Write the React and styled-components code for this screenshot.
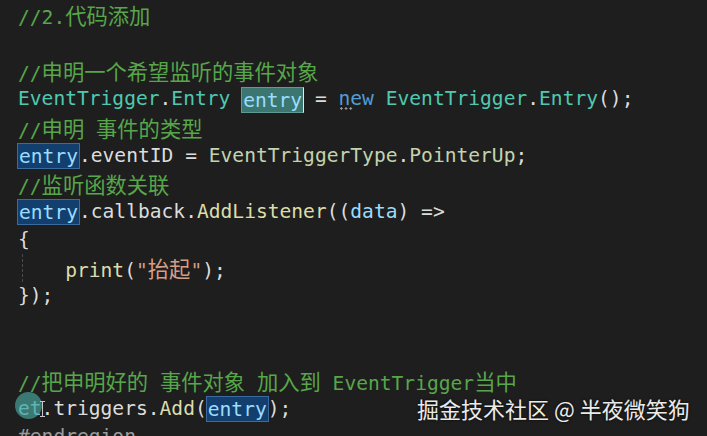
import styled, { createGlobalStyle } from "styled-components";

const GlobalStyle = createGlobalStyle`
  html, body {
    margin: 0;
    padding: 0;
    background: #1e1e1e;
  }
  #root {
    width: 707px;
    height: 436px;
    overflow: hidden;
  }
`;

const colors = {
  plain: "#dcdcdc",
  comment: "#57a64a",
  type: "#4ec9b0",
  local: "#9cdcfe",
  method: "#dcdcaa",
  keyword: "#569cd6",
  string: "#d69d85",
  enum: "#c3d3ae",
  region: "#9b9b9b",
};

const Editor = styled.div`
  position: relative;
  width: 707px;
  height: 436px;
  background: #1e1e1e;
  padding: 1px 0 0 18px;
  box-sizing: border-box;
  font-family: "DejaVu Sans Mono", "Noto Sans CJK SC", monospace;
  font-size: 19.6px;
  overflow: hidden;
`;

const Line = styled.div`
  position: relative;
  height: 28.15px;
  line-height: 28.15px;
  white-space: pre;
`;

const Token = styled.span`
  color: ${(p) => colors[p.$kind] || colors.plain};
`;

const Han = styled.span`
  font-family: "Noto Sans CJK SC", sans-serif;
  font-size: 21.3px;
`;

const Mark = styled.span`
  display: inline-block;
  line-height: 26px;
  height: 26px;
  margin: 0 -1px;
  padding: 0 1px;
  vertical-align: middle;
  color: #9cdcfe;
  background: ${(p) => (p.$active ? "#3b7770" : "#133f6e")};
  border: 1px solid ${(p) => (p.$active ? "#5f9a93" : "#3a6a9e")};
  border-right-color: ${(p) => (p.$active ? "#e6e6e6" : "#3a6a9e")};
  box-sizing: border-box;
`;

const Dots = styled.span`
  position: absolute;
  left: 321px;
  top: 22px;
  width: 14px;
  height: 3px;
  background: radial-gradient(circle, #9a9a9a 1px, transparent 1.3px) 0 0 / 4.7px 3px repeat-x;
`;

const IndentGuide = styled.span`
  position: absolute;
  left: 4px;
  top: 0;
  height: 28px;
  border-left: 1px dashed #4a4a4a;
`;

const ClickRing = styled.span`
  position: absolute;
  left: -3px;
  top: -3px;
  width: 27px;
  height: 27px;
  border-radius: 50%;
  background: rgba(70, 160, 150, 0.7);
  z-index: 1;
`;

const Caret = styled.span`
  position: absolute;
  left: 24px;
  top: 6px;
  width: 5px;
  height: 16px;
  border-left: 1px solid #c8c8c8;
  z-index: 2;
  &::before, &::after {
    content: "";
    position: absolute;
    left: -3px;
    width: 5px;
    border-top: 1px solid #c8c8c8;
  }
  &::before { top: 0; }
  &::after { bottom: 0; }
`;

const Watermark = styled.div`
  position: absolute;
  left: 417px;
  top: 393px;
  font-family: "Noto Sans CJK SC", sans-serif;
  font-size: 22px;
  line-height: 30px;
  color: #ebebeb;
  white-space: pre;
  text-shadow: 0 0 3px rgba(0, 0, 0, 0.8);
`;

const CJK = /([\u3000-\u9fff\uff00-\uffef]+)/;

const Txt = ({ children }) =>
  children.split(CJK).map((part, i) =>
    CJK.test(part) ? <Han key={i}>{part}</Han> : part
  );

const T = ({ k, children }) => (
  <Token $kind={k}>
    <Txt>{children}</Txt>
  </Token>
);

const App = () => (
  <>
    <GlobalStyle />
    <Editor>
      <Line>
        <T k="comment">//2.代码添加</T>
      </Line>
      <Line />
      <Line>
        <T k="comment">//申明一个希望监听的事件对象</T>
      </Line>
      <Line>
        <T k="type">EventTrigger</T>
        <T k="plain">.</T>
        <T k="type">Entry</T>
        <T k="plain"> </T>
        <Mark $active>entry</Mark>
        <T k="plain"> = </T>
        <T k="keyword">new</T>
        <T k="plain"> </T>
        <T k="type">EventTrigger</T>
        <T k="plain">.</T>
        <T k="type">Entry</T>
        <T k="plain">();</T>
        <Dots />
      </Line>
      <Line>
        <T k="comment">//申明 事件的类型</T>
      </Line>
      <Line>
        <Mark>entry</Mark>
        <T k="plain">.eventID = </T>
        <T k="enum">EventTriggerType</T>
        <T k="plain">.</T>
        <T k="enum">PointerUp</T>
        <T k="plain">;</T>
      </Line>
      <Line>
        <T k="comment">//监听函数关联</T>
      </Line>
      <Line>
        <Mark>entry</Mark>
        <T k="plain">.callback.</T>
        <T k="method">AddListener</T>
        <T k="plain">((</T>
        <T k="local">data</T>
        <T k="plain">) =&gt;</T>
      </Line>
      <Line>
        <T k="plain">{"{"}</T>
      </Line>
      <Line>
        <IndentGuide />
        <T k="plain">    </T>
        <T k="method">print</T>
        <T k="plain">(</T>
        <T k="string">"抬起"</T>
        <T k="plain">);</T>
      </Line>
      <Line>
        <T k="plain">{"});"}</T>
      </Line>
      <Line />
      <Line />
      <Line>
        <T k="comment">//把申明好的 事件对象 加入到 EventTrigger当中</T>
      </Line>
      <Line>
        <ClickRing />
        <T k="local">et</T>
        <T k="plain">.triggers.</T>
        <T k="method">Add</T>
        <T k="plain">(</T>
        <Mark>entry</Mark>
        <T k="plain">);</T>
        <Caret />
      </Line>
      <Line>
        <T k="region">#endregion</T>
      </Line>
      <Watermark>掘金技术社区 @ 半夜微笑狗</Watermark>
    </Editor>
  </>
);

export default App;
